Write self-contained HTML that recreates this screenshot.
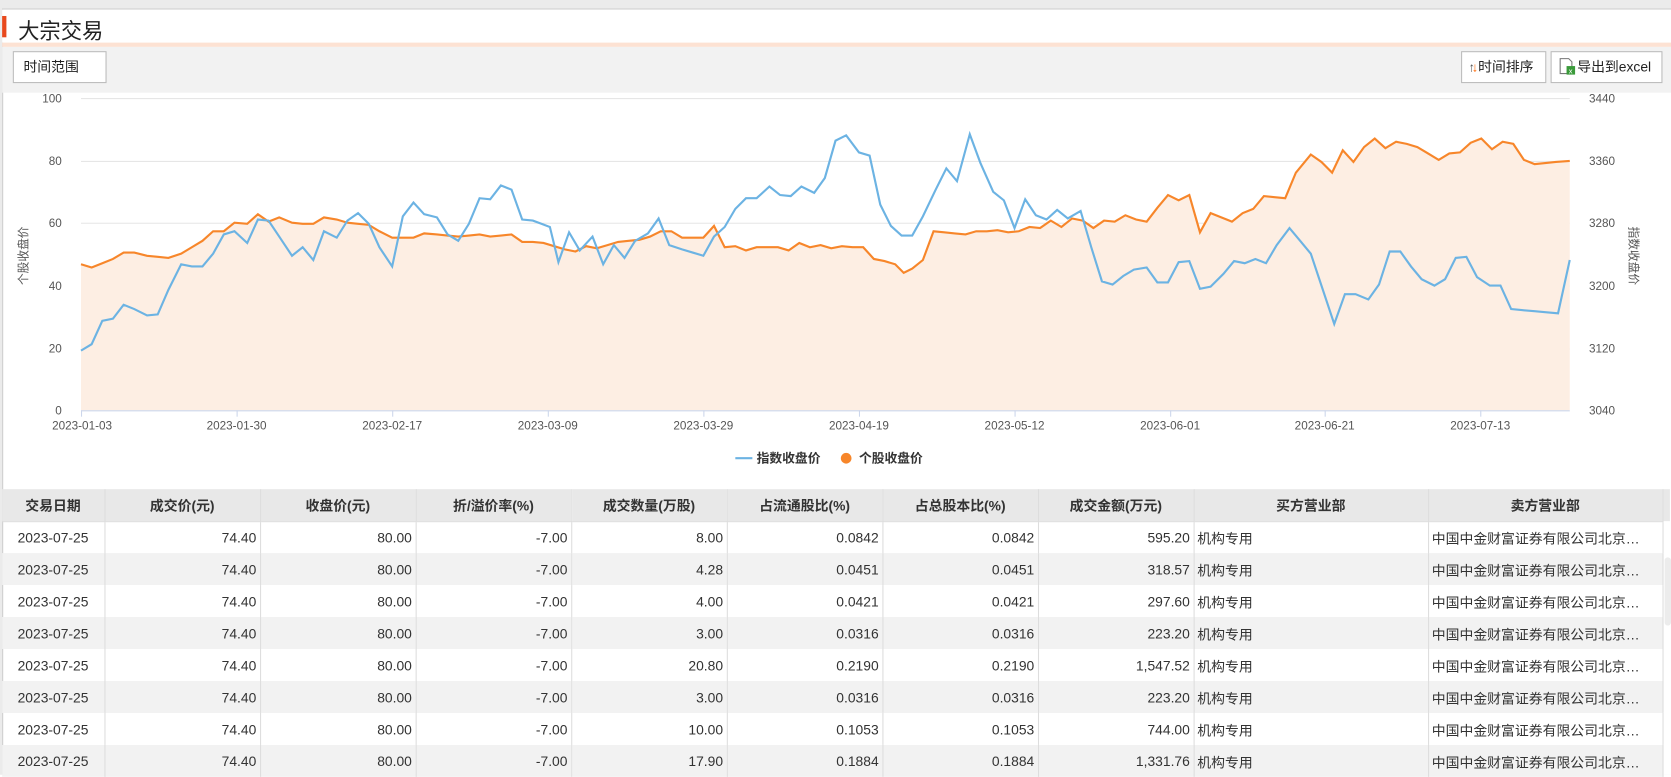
<!DOCTYPE html>
<html><head><meta charset="utf-8"><style>
*{margin:0;padding:0;box-sizing:border-box}
body{width:1671px;height:774px;overflow:hidden;background:#fff;font-family:"Liberation Sans","Noto Sans CJK SC",sans-serif;position:relative}
#w{position:absolute;left:0;top:0;width:1568px;height:727px;transform:scale(1.06569);transform-origin:0 0;background:#ebebeb}
.panel{position:absolute;left:2px;top:8px;width:1566px;height:719px;background:#fff;border-left:1px solid #ccc;border-top:1px solid #ccc}
.title{position:absolute;left:2px;top:9px;height:31px;width:1566px;background:#fff}
.title .bar{position:absolute;left:0;top:6px;width:4px;height:20px;background:#e8491d}
.title span{position:absolute;left:15px;top:4px;font-size:20px;color:#222}
.sep{position:absolute;left:2px;top:40px;width:1566px;height:4px;background:#fde2d3}
.tool{position:absolute;left:2px;top:44px;width:1566px;height:43px;background:#f2f2f2}
.btn{position:absolute;top:48px;height:30px;background:#fff;border:1px solid #bbb;font-size:13px;line-height:28px;color:#222}
table{position:absolute;left:2px;top:459px;border-collapse:collapse;font-size:13px;color:#333;table-layout:fixed}
td,th{height:30px;border-right:1px solid #ddd;padding:0 3px;white-space:nowrap;overflow:hidden}
th{background:#e8e8e8;font-weight:bold;color:#333;border-bottom:1px solid #ddd}
td{text-align:right}
td.l{text-align:left}td.c{text-align:center}
tr:nth-child(odd) td{background:#f2f2f2}
.sb{position:absolute;left:1561px;top:459px;width:6px;height:30px;background:#e8e8e8}
.sb2{position:absolute;left:1562px;top:523px;width:6px;height:64px;background:#ececec;border-radius:3px}
</style></head><body><div id="w">
<div class="panel"></div>
<div class="title"><div class="bar"></div><span>大宗交易</span></div>
<div class="sep"></div>
<div class="tool"></div>
<div class="btn" style="left:12px;width:88px;padding-left:9px">时间范围</div>
<div class="btn" style="left:1371px;width:80px;padding-left:6px"><span style="font-size:12px;color:#555">↑</span><span style="font-size:12px;color:#f60;margin-left:-3px">↓</span>时间排序</div>
<div class="btn" style="left:1455px;width:105px;padding-left:6px"><svg width="18" height="18" style="vertical-align:-4px" viewBox="0 0 18 18"><path d="M2 2h8l3 3v11H2z" fill="#fff" stroke="#777"/><rect x="8" y="9" width="8" height="8" fill="#3a9a3a"/><text x="10" y="16" font-size="7" fill="#fff" font-family="Liberation Sans">x</text></svg>导出到excel</div>
<svg style="position:absolute;left:0;top:87px" width="1568" height="370">
<g transform="translate(0,-87)">
<g stroke="#e6e6e6" stroke-width="1">
<line x1="76" y1="92.5" x2="1473" y2="92.5"/><line x1="76" y1="151.5" x2="1473" y2="151.5"/><line x1="76" y1="209.5" x2="1473" y2="209.5"/><line x1="76" y1="268.5" x2="1473" y2="268.5"/><line x1="76" y1="327.5" x2="1473" y2="327.5"/>
</g>
<polygon fill="#fdeee3" points="76,385 76,248 86,251 96,247 106,243 116,237 126,237 138,240 148,241 158,242 170,238 180,232 190,226 200,217 210,217 220,209 232,210 242,201 252,208 262,204 274,209 284,210 294,210 304,204 316,206 326,209 336,210 346,211 356,217 368,223 378,223 388,223 398,219 410,220 420,221 430,222 440,221 450,220 460,222 470,221 480,220 490,227 500,227 510,228 520,231 530,234 540,236 550,231 560,233 570,230 580,227 590,226 600,225 610,222 620,217 630,217 640,223 650,223 660,223 670,212 680,232 690,231 700,235 710,232 720,232 730,232 740,235 750,228 760,232 770,230 780,233 790,231 800,232 810,232 820,243 830,245 840,248 848,256 856,252 866,244 876,217 886,218 896,219 906,220 916,217 926,217 936,216 946,218 956,217 966,213 976,214 986,207 996,213 1006,205 1016,207 1026,214 1036,207 1046,208 1056,202 1066,206 1076,208 1086,195 1096,183 1106,188 1116,183 1126,218 1136,200 1146,204 1156,208 1166,200 1176,196 1186,184 1196,185 1206,186 1216,162 1230,145 1240,152 1250,162 1260,141 1270,152 1280,138 1290,130 1300,139 1310,133 1320,135 1330,138 1340,144 1350,150 1360,144 1370,143 1380,134 1390,130 1400,140 1410,133 1420,135 1430,150 1440,154 1450,153 1460,152 1473,151 1473,385"/>
<polyline fill="none" stroke="#f7862a" stroke-width="2" points="76,248 86,251 96,247 106,243 116,237 126,237 138,240 148,241 158,242 170,238 180,232 190,226 200,217 210,217 220,209 232,210 242,201 252,208 262,204 274,209 284,210 294,210 304,204 316,206 326,209 336,210 346,211 356,217 368,223 378,223 388,223 398,219 410,220 420,221 430,222 440,221 450,220 460,222 470,221 480,220 490,227 500,227 510,228 520,231 530,234 540,236 550,231 560,233 570,230 580,227 590,226 600,225 610,222 620,217 630,217 640,223 650,223 660,223 670,212 680,232 690,231 700,235 710,232 720,232 730,232 740,235 750,228 760,232 770,230 780,233 790,231 800,232 810,232 820,243 830,245 840,248 848,256 856,252 866,244 876,217 886,218 896,219 906,220 916,217 926,217 936,216 946,218 956,217 966,213 976,214 986,207 996,213 1006,205 1016,207 1026,214 1036,207 1046,208 1056,202 1066,206 1076,208 1086,195 1096,183 1106,188 1116,183 1126,218 1136,200 1146,204 1156,208 1166,200 1176,196 1186,184 1196,185 1206,186 1216,162 1230,145 1240,152 1250,162 1260,141 1270,152 1280,138 1290,130 1300,139 1310,133 1320,135 1330,138 1340,144 1350,150 1360,144 1370,143 1380,134 1390,130 1400,140 1410,133 1420,135 1430,150 1440,154 1450,153 1460,152 1473,151"/>
<polyline fill="none" stroke="#6cb3e3" stroke-width="2" points="76,329 86,323 96,301 106,299 116,286 126,290 138,296 148,295 158,272 170,248 180,250 190,250 200,238 210,220 220,217 232,228 242,206 252,207 262,222 274,240 284,232 294,244 304,217 316,223 326,207 336,200 346,210 356,232 368,250 378,203 388,190 398,201 410,204 420,220 430,226 440,210 450,186 460,187 470,174 480,178 490,206 500,207 508,210 516,213 524,246 534,218 544,235 556,222 566,248 576,230 586,242 596,226 608,219 618,205 628,230 640,234 650,237 660,240 670,222 680,213 690,196 700,186 710,186 722,175 732,183 742,184 752,175 764,181 774,167 784,132 794,127 806,143 816,146 826,192 836,212 846,221 856,221 866,203 878,178 888,158 898,170 910,126 920,153 932,180 942,188 952,214 962,187 972,202 982,206 992,197 1002,205 1014,198 1024,232 1034,264 1044,267 1054,259 1064,253 1076,251 1086,265 1096,265 1106,246 1116,245 1126,271 1136,269 1148,257 1158,245 1168,247 1178,243 1188,247 1198,230 1210,214 1220,226 1230,238 1240,268 1252,304 1262,276 1272,276 1284,281 1294,267 1304,236 1314,236 1324,250 1334,262 1346,268 1356,262 1366,242 1376,241 1386,260 1398,268 1408,268 1418,290 1428,291 1440,292 1450,293 1462,294 1473,244"/>
<line x1="76" y1="385.5" x2="1473" y2="385.5" stroke="#ccd6eb"/>
<g stroke="#ccd6eb"><line x1="76.5" y1="385" x2="76.5" y2="391"/><line x1="222.5" y1="385" x2="222.5" y2="391"/><line x1="368.5" y1="385" x2="368.5" y2="391"/><line x1="514.5" y1="385" x2="514.5" y2="391"/><line x1="660.5" y1="385" x2="660.5" y2="391"/><line x1="806.5" y1="385" x2="806.5" y2="391"/><line x1="952.5" y1="385" x2="952.5" y2="391"/><line x1="1098.5" y1="385" x2="1098.5" y2="391"/><line x1="1243.5" y1="385" x2="1243.5" y2="391"/><line x1="1389.5" y1="385" x2="1389.5" y2="391"/></g>
<g font-size="11" fill="#555" font-family="Liberation Sans">
<g text-anchor="end"><text x="58" y="96">100</text><text x="58" y="155">80</text><text x="58" y="213">60</text><text x="58" y="272">40</text><text x="58" y="331">20</text><text x="58" y="389">0</text></g>
<g><text x="1491" y="96">3440</text><text x="1491" y="155">3360</text><text x="1491" y="213">3280</text><text x="1491" y="272">3200</text><text x="1491" y="331">3120</text><text x="1491" y="389">3040</text></g>
<g text-anchor="middle"><text x="77" y="403">2023-01-03</text><text x="222" y="403">2023-01-30</text><text x="368" y="403">2023-02-17</text><text x="514" y="403">2023-03-09</text><text x="660" y="403">2023-03-29</text><text x="806" y="403">2023-04-19</text><text x="952" y="403">2023-05-12</text><text x="1098" y="403">2023-06-01</text><text x="1243" y="403">2023-06-21</text><text x="1389" y="403">2023-07-13</text></g>
<text transform="translate(26,240) rotate(-90)" text-anchor="middle" font-family="Liberation Sans,Noto Sans CJK SC">个股收盘价</text>
<text transform="translate(1529,240) rotate(90)" text-anchor="middle" font-family="Liberation Sans,Noto Sans CJK SC">指数收盘价</text>
</g>
<line x1="690" y1="430" x2="706" y2="430" stroke="#6cb3e3" stroke-width="2"/>
<text x="710" y="434" font-size="12" font-weight="bold" fill="#333" font-family="Liberation Sans,Noto Sans CJK SC">指数收盘价</text>
<circle cx="794" cy="430" r="5" fill="#f7862a"/>
<text x="806" y="434" font-size="12" font-weight="bold" fill="#333" font-family="Liberation Sans,Noto Sans CJK SC">个股收盘价</text>
</g></svg>
<table>
<colgroup><col style="width:96px"><col style="width:146px"><col style="width:146px"><col style="width:146px"><col style="width:146px"><col style="width:146px"><col style="width:146px"><col style="width:146px"><col style="width:220px"><col style="width:220px"></colgroup>
<tr><th>交易日期</th><th>成交价(元)</th><th>收盘价(元)</th><th>折/溢价率(%)</th><th>成交数量(万股)</th><th>占流通股比(%)</th><th>占总股本比(%)</th><th>成交金额(万元)</th><th>买方营业部</th><th>卖方营业部</th></tr>
<tr><td class="c">2023-07-25</td><td>74.40</td><td>80.00</td><td>-7.00</td><td>8.00</td><td>0.0842</td><td>0.0842</td><td>595.20</td><td class="l">机构专用</td><td class="l">中国中金财富证券有限公司北京…</td></tr>
<tr><td class="c">2023-07-25</td><td>74.40</td><td>80.00</td><td>-7.00</td><td>4.28</td><td>0.0451</td><td>0.0451</td><td>318.57</td><td class="l">机构专用</td><td class="l">中国中金财富证券有限公司北京…</td></tr>
<tr><td class="c">2023-07-25</td><td>74.40</td><td>80.00</td><td>-7.00</td><td>4.00</td><td>0.0421</td><td>0.0421</td><td>297.60</td><td class="l">机构专用</td><td class="l">中国中金财富证券有限公司北京…</td></tr>
<tr><td class="c">2023-07-25</td><td>74.40</td><td>80.00</td><td>-7.00</td><td>3.00</td><td>0.0316</td><td>0.0316</td><td>223.20</td><td class="l">机构专用</td><td class="l">中国中金财富证券有限公司北京…</td></tr>
<tr><td class="c">2023-07-25</td><td>74.40</td><td>80.00</td><td>-7.00</td><td>20.80</td><td>0.2190</td><td>0.2190</td><td>1,547.52</td><td class="l">机构专用</td><td class="l">中国中金财富证券有限公司北京…</td></tr>
<tr><td class="c">2023-07-25</td><td>74.40</td><td>80.00</td><td>-7.00</td><td>3.00</td><td>0.0316</td><td>0.0316</td><td>223.20</td><td class="l">机构专用</td><td class="l">中国中金财富证券有限公司北京…</td></tr>
<tr><td class="c">2023-07-25</td><td>74.40</td><td>80.00</td><td>-7.00</td><td>10.00</td><td>0.1053</td><td>0.1053</td><td>744.00</td><td class="l">机构专用</td><td class="l">中国中金财富证券有限公司北京…</td></tr>
<tr><td class="c">2023-07-25</td><td>74.40</td><td>80.00</td><td>-7.00</td><td>17.90</td><td>0.1884</td><td>0.1884</td><td>1,331.76</td><td class="l">机构专用</td><td class="l">中国中金财富证券有限公司北京…</td></tr>
</table>
<div class="sb"></div><div class="sb2"></div>
</div></body></html>
